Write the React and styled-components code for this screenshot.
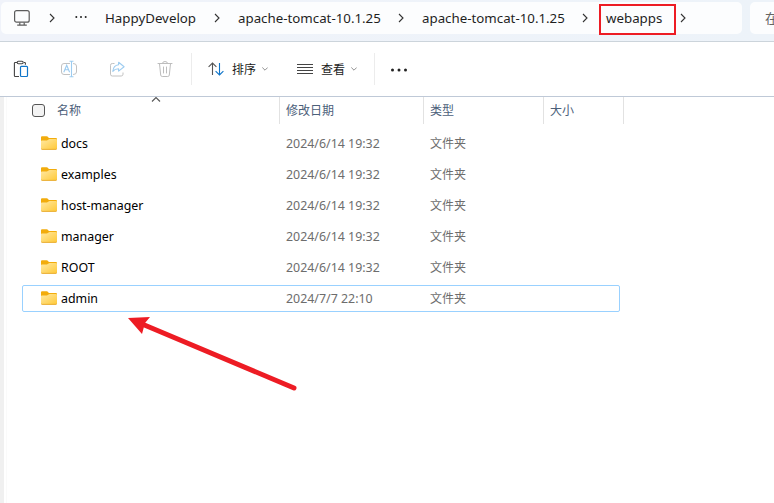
import React from "react";
import styled, { createGlobalStyle } from "styled-components";

const GlobalStyle = createGlobalStyle`
  * { box-sizing: border-box; }
  body {
    margin: 0;
    background: #fff;
    font-family: "Noto Sans", "Noto Sans CJK SC", sans-serif;
    overflow: hidden;
  }
  svg { display: block; }
`;

const Explorer = styled.div`
  position: relative;
  display: flex;
  flex-direction: column;
  width: 774px;
  height: 503px;
  overflow: hidden;
  background: #fff;
`;

const AddressBar = styled.header`
  display: flex;
  gap: 8px;
  flex: none;
  height: 42px;
  padding: 2px 0 7px 1px;
  background: linear-gradient(90deg, #f0f3fa, #edf3f9);
  border-bottom: 1px solid #ccd4db;
`;

const Breadcrumbs = styled.nav`
  display: grid;
  grid-template-columns: 42px 32px 30px 92px 41px 143px 41px 143px 34px 77px 66px;
  grid-template-rows: 32px;
  align-items: center;
  width: 741px;
  height: 32px;
  background: #fcfdfe;
  border-radius: 5px;
  color: #1f1f1f;
  font-size: 13.3px;
  line-height: 20px;
  white-space: nowrap;
`;

const DeviceIcon = styled.svg`
  margin-left: 12px;
`;

const ChevronIcon = styled.svg`
  margin-left: ${(p) => p.$inset}px;
`;

const CurrentFolder = styled.span`
  align-self: start;
  height: 31px;
  padding: 2px 0 0 5px;
  border: 2px solid #ed1c24;
  margin-top: 2px;
`;

const SearchBox = styled.div`
  flex: none;
  width: 40px;
  height: 32px;
  padding: 7px 0 0 15px;
  border-radius: 5px;
  background: #fcfdfe;
  color: #666;
  font-size: 13px;
  line-height: 19px;
`;

const Toolbar = styled.div`
  display: grid;
  grid-template-columns: 48px 48px 48px 47px 1px 89px 93px 1px auto;
  align-items: center;
  flex: none;
  height: 55px;
  border-bottom: 1px solid #bfc9d7;
`;

const ToolIcon = styled.svg`
  margin-left: 12px;
`;

const Divider = styled.span`
  height: 32px;
  background: #ececec;
`;

const MenuButton = styled.span`
  display: flex;
  align-items: center;
  gap: ${(p) => p.$gap}px;
  padding-left: ${(p) => p.$pad}px;
  color: #1b1b1b;
  font-size: 12px;
  line-height: 18px;
`;

const MenuLabel = styled.span`
  width: 24px;
  padding-top: 2px;
  margin-right: -2px;
`;

const MoreIcon = styled.svg`
  margin-top: 1px;
`;

const Content = styled.main`
  display: flex;
  flex: 1;
`;

const PaneEdge = styled.div`
  flex: none;
  width: 7px;
  border-left: 4px solid #f0f0f0;
  border-right: 1px solid #fafafa;
`;

const FileList = styled.div`
  width: 617px;
`;

const ColumnHeader = styled.div`
  display: grid;
  grid-template-columns: 273px 144px 120px 80px;
  height: 27px;
`;

const ColumnCell = styled.div`
  position: relative;
  display: flex;
  align-items: center;
  border-right: 1px solid #e2e2e2;
  padding-left: ${(p) => (p.$first ? 25 : 6)}px;
  color: #4c607a;
  font-size: 12px;
  line-height: 18px;
`;

const Checkbox = styled.span`
  width: 13px;
  height: 13px;
  margin-right: 12px;
  border: 1px solid #555;
  border-radius: 3px;
  background: #f3f3f3;
`;

const SortMark = styled.svg`
  position: absolute;
  left: 144px;
  top: 0;
`;

const Rows = styled.div`
  display: grid;
  gap: 4px;
  padding: 6px 4px 0 15px;
`;

const FileRow = styled.div`
  display: grid;
  grid-template-columns: 20px 225px 144px 1fr;
  align-items: center;
  height: 27px;
  padding-left: 18px;
  border: 1px solid ${(p) => (p.$selected ? "#99d1ff" : "transparent")};
  border-radius: 2px;
  font-size: 12.4px;
  line-height: 20px;
`;

const FileName = styled.span`
  color: #000;
`;

const FileDetail = styled.span`
  color: #6d6d6d;
`;

const FileType = styled(FileDetail)`
  font-size: 12px;
`;

const FolderIcon = styled.svg`
  margin-bottom: 1px;
`;

const Pointer = styled.svg`
  position: absolute;
  left: 120px;
  top: 305px;
`;

const files = [
  ["docs", "2024/6/14 19:32"],
  ["examples", "2024/6/14 19:32"],
  ["host-manager", "2024/6/14 19:32"],
  ["manager", "2024/6/14 19:32"],
  ["ROOT", "2024/6/14 19:32"],
  ["admin", "2024/7/7 22:10"],
];

function Chevron({ inset }) {
  return (
    <ChevronIcon $inset={inset} width="6" height="10" viewBox="0 0 6 10" fill="none" stroke="#333" strokeWidth="1.1">
      <path d="M1 1l4 4-4 4" />
    </ChevronIcon>
  );
}

function DropMark() {
  return (
    <svg width="6" height="4" viewBox="0 0 6 4" fill="none" stroke="#909090">
      <path d="M.3.5L3 3.2 5.7.5" />
    </svg>
  );
}

function Folder() {
  return (
    <FolderIcon width="16" height="14" viewBox="0 0 16 14">
      <defs>
        <linearGradient id="folder" x1="0" y1="0" x2="1" y2="1">
          <stop offset="0" stopColor="#ffe9a4" />
          <stop offset="1" stopColor="#ffc938" />
        </linearGradient>
      </defs>
      <path d="M0 1.3Q0 .3 1 .3h4.6c.7 0 1 .3 1.5.8l.7.8H15q1 0 1 1V9H0z" fill="#f2ac0c" />
      <path d="M0 5.2q0-.8.9-.8h4.4c1 0 1.3-.2 1.9-.7.5-.5.9-.7 1.6-.7H15q1 0 1 1v8.3q0 1-1 1H1q-1 0-1-1z" fill="url(#folder)" />
      <path d="M.2 12.7q.2.7.9.7h13.8q.7 0 .9-.7" fill="none" stroke="#e6a51d" strokeWidth=".9" />
    </FolderIcon>
  );
}

export default function App() {
  return (
    <Explorer>
      <GlobalStyle />
      <AddressBar>
        <Breadcrumbs>
          <DeviceIcon width="18" height="18" viewBox="0 0 18 18" fill="none" stroke="#5c5c5c" strokeWidth="1.2">
            <rect x="1.6" y="1.6" width="14.6" height="11.6" rx="2" />
            <path d="M6.8 13.4v2.4M11.2 13.4v2.4M4.2 16.2h9.6" />
          </DeviceIcon>
          <Chevron inset={6} />
          <svg width="12" height="4" viewBox="0 0 12 4" fill="#222">
            <circle cx="1.3" cy="1" r="1" /><circle cx="6" cy="1" r="1" /><circle cx="10.7" cy="1" r="1" />
          </svg>
          <span>HappyDevelop</span>
          <Chevron inset={17} />
          <span>apache-tomcat-10.1.25</span>
          <Chevron inset={17} />
          <span>apache-tomcat-10.1.25</span>
          <Chevron inset={17} />
          <CurrentFolder>webapps</CurrentFolder>
          <Chevron inset={4} />
        </Breadcrumbs>
        <SearchBox>在</SearchBox>
      </AddressBar>

      <Toolbar>
        <ToolIcon width="18" height="18" viewBox="0 0 18 18" fill="none" strokeWidth="1.1">
          <path d="M5 2.5H3.2q-.8 0-.8.8v12.4q0 .8.8.8H7M12 2.5h.6q.8 0 .8.8v1.4" stroke="#444" />
          <rect x="5.2" y="1.3" width="6" height="2.4" rx="1.2" stroke="#444" />
          <rect x="8.5" y="6.3" width="7" height="10.2" rx=".9" stroke="#0f75c9" strokeWidth="1.2" />
        </ToolIcon>
        <ToolIcon width="18" height="18" viewBox="0 0 18 18" fill="none">
          <path d="M10 3.5H4Q1.5 3.5 1.5 6v6Q1.5 14.5 4 14.5h6M13 3.5q3.5 0 3.5 2.5v6q0 2.5-3.5 2.5" stroke="#c2c2c2" />
          <path d="M3.8 12.2l2.9-7 2.9 7M4.8 9.8h3.8M11.5 1.3v15.4M9.5 1.3h4M9.5 16.7h4" stroke="#9dccf0" strokeWidth="1.1" />
        </ToolIcon>
        <ToolIcon width="18" height="18" viewBox="0 0 18 18" fill="none">
          <path d="M6.5 3.5H4.3Q2.5 3.5 2.5 5.3v8.9Q2.5 16 4.3 16h8.9Q15 16 15 14.2v-1.7" stroke="#c2c2c2" />
          <path d="M10.6 2.2l5.5 4.5-5.5 4.4V8.7c-2.6 0-4.3.7-5.8 2.6.4-3.8 2.5-6.3 5.8-6.6z" stroke="#9dccf0" strokeWidth="1.1" strokeLinejoin="round" />
        </ToolIcon>
        <ToolIcon width="18" height="18" viewBox="0 0 18 18" fill="none" stroke="#bdbdbd" strokeLinecap="round">
          <path d="M2 3.5h14M6.5 3.2q0-1.7 2.5-1.7t2.5 1.7M3.5 3.8l1.2 11.3q.2 1.4 1.6 1.4h5.4q1.4 0 1.6-1.4L14.5 3.8M7.5 7v6M10.5 7v6" />
        </ToolIcon>
        <Divider />
        <MenuButton $gap={8} $pad={16}>
          <svg width="16" height="14" viewBox="0 0 16 14" fill="none" strokeWidth="1.1">
            <path d="M4.5 13V1M.6 4.8L4.5 1l3.9 3.8" stroke="#555" />
            <path d="M11.5 1v12M7.6 9.2l3.9 3.8 3.9-3.8" stroke="#0f75c9" />
          </svg>
          <MenuLabel>排序</MenuLabel>
          <DropMark />
        </MenuButton>
        <MenuButton $gap={8} $pad={16}>
          <svg width="16" height="12" viewBox="0 0 16 12" stroke="#444">
            <path d="M0 1.5h16M0 4.5h16M0 7.5h16M0 10.5h16" />
          </svg>
          <MenuLabel>查看</MenuLabel>
          <DropMark />
        </MenuButton>
        <Divider />
        <MenuButton $gap={0} $pad={15}>
          <MoreIcon width="18" height="4" viewBox="0 0 18 4" fill="#222">
            <circle cx="2.5" cy="2" r="1.5" /><circle cx="9" cy="2" r="1.5" /><circle cx="15.5" cy="2" r="1.5" />
          </MoreIcon>
        </MenuButton>
      </Toolbar>

      <Content>
        <PaneEdge />
        <FileList>
          <ColumnHeader>
            <ColumnCell $first>
              <Checkbox />
              名称
              <SortMark width="10" height="6" viewBox="0 0 10 6" fill="none" stroke="#555" strokeWidth="1.1">
                <path d="M1 4.5l4-4 4 4" />
              </SortMark>
            </ColumnCell>
            <ColumnCell>修改日期</ColumnCell>
            <ColumnCell>类型</ColumnCell>
            <ColumnCell>大小</ColumnCell>
          </ColumnHeader>
          <Rows>
            {files.map(([name, date]) => (
              <FileRow key={name} $selected={name === "admin"}>
                <Folder />
                <FileName>{name}</FileName>
                <FileDetail>{date}</FileDetail>
                <FileType>文件夹</FileType>
              </FileRow>
            ))}
          </Rows>
        </FileList>
      </Content>

      <Pointer width="180" height="90" viewBox="0 0 180 90">
        <path d="M22 19l152 64" stroke="#ed1c24" strokeWidth="5" strokeLinecap="round" />
        <path d="M8 13l22-1-5 6-3 11z" fill="#ed1c24" />
      </Pointer>
    </Explorer>
  );
}
